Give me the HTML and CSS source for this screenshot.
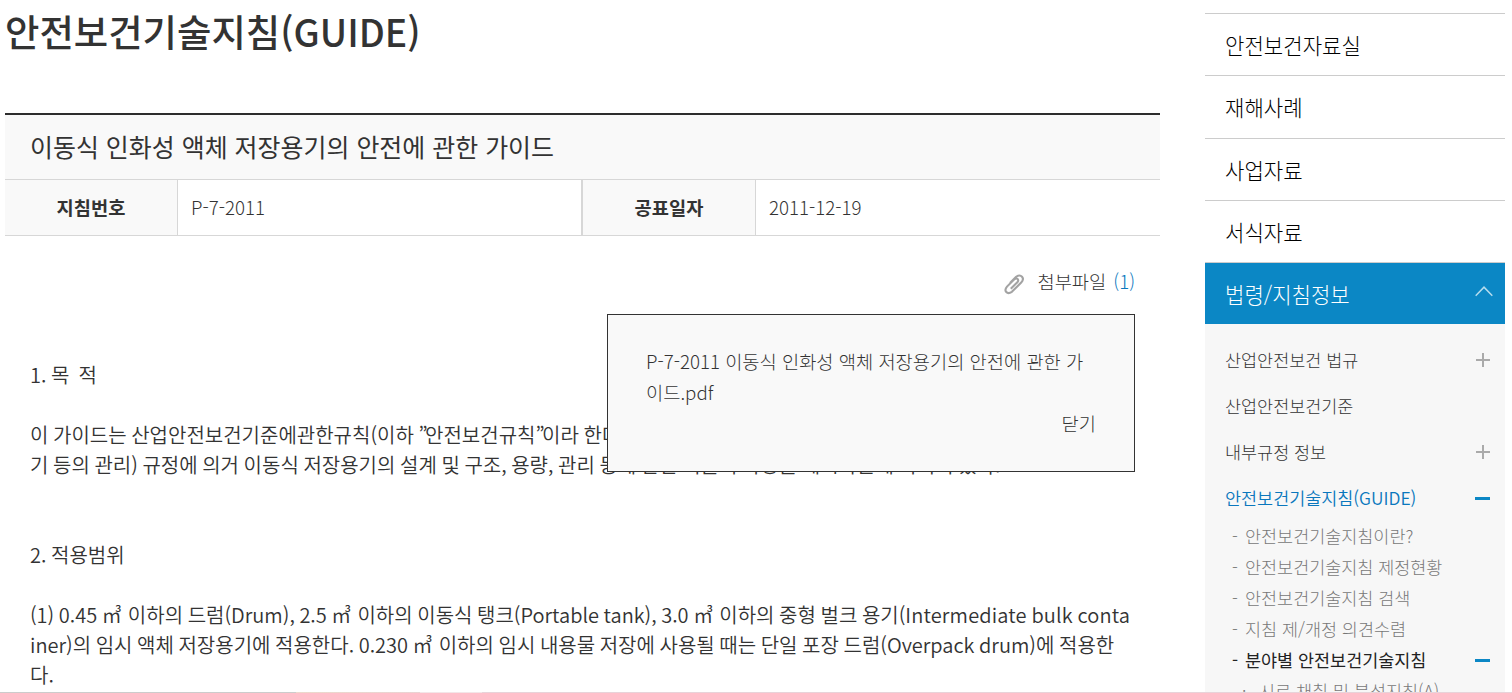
FILE: index.html
```html
<!DOCTYPE html>
<html lang="ko">
<head>
<meta charset="UTF-8">
<meta name="viewport" content="width=device-width, initial-scale=1.0">
<title>안전보건기술지침(GUIDE)</title>
<link rel="stylesheet" href="styles.css">
</head>
<body>
<div class="wrap">
<main class="content">
<h1 class="page-title">안전보건기술지침(GUIDE)</h1>
<section class="board-view">
<h2 class="board-title">이동식 인화성 액체 저장용기의 안전에 관한 가이드</h2>
<dl class="board-info">
<dt>지침번호</dt>
<dd>P-7-2011</dd>
<dt class="second">공표일자</dt>
<dd>2011-12-19</dd>
</dl>
<div class="file-area">
<a class="file-btn">
<svg class="icon-clip" width="20" height="21" viewBox="0 0 20 21"><path d="M6.800 14.800 13.600 8q1.200-1.700 0-2.900t-3 0L3 12.600q-2.700 3.200-.7 5.400t5.600-.2l9.300-9.200q3-3.500.8-5.900t-5.900.1L6 9.100"/></svg>
<span class="file-label">첨부파일</span> <span class="file-count">(1)</span>
</a>
<div class="file-layer">
<p class="file-name">P-7-2011 이동식 인화성 액체 저장용기의 안전에 관한 가<br>이드.pdf</p>
<p class="file-close">닫기</p>
</div>
</div>
<div class="board-text">
<p>1. 목&nbsp; 적</p>
<p>이 가이드는 산업안전보건기준에관한규칙(이하 <span class="quote">”</span>안전보건규칙<span class="quote">”</span>이라 한다)<br>기 등의 관리) 규정에 의거 이동식 저장용기의 설계 및 구조, 용량, 관리 등에 관한 기술적 사항을 제시하는데 목적이 있다.</p>
<p class="next">2. 적용범위</p>
<p>(1) 0.45 <span class="unit">㎥</span> 이하의 드럼(Drum), 2.5 <span class="unit">㎥</span> 이하의 이동식 탱크(Portable tank), 3.0 <span class="unit">㎥</span> 이하의 중형 벌크 용기(<span class="latin">Intermediate bulk conta</span><br>iner)의 임시 액체 저장용기에 적용한다. 0.230 <span class="unit">㎥</span> 이하의 임시 내용물 저장에 사용될 때는 단일 포장 드럼(Overpack drum)에 적용한<br>다.</p>
</div>
</section>
</main>
<nav class="side">
<ul class="side-menu">
<li>안전보건자료실</li>
<li>재해사례</li>
<li>사업자료</li>
<li>서식자료</li>
<li class="on">법령/지침정보
<svg class="icon-up" width="18" height="11" viewBox="0 0 18 11"><path d="M.7 9.800 9 1.200l8.300 8.600"/></svg>
</li>
</ul>
<ul class="sub-menu">
<li>산업안전보건 법규<i class="plus"></i></li>
<li>산업안전보건기준</li>
<li>내부규정 정보<i class="plus"></i></li>
<li class="on">안전보건기술지침(GUIDE)<i class="minus"></i></li>
</ul>
<ul class="depth-menu">
<li>안전보건기술지침이란?</li>
<li>안전보건기술지침 제정현황</li>
<li>안전보건기술지침 검색</li>
<li>지침 제/개정 의견수렴</li>
<li class="on">분야별 안전보건기술지침<i class="minus"></i></li>
<li class="leaf">시료 채취 및 분석지침(A)</li>
</ul>
</nav>
</div>
<div class="bottom-line"></div>
</body>
</html>
```
FILE: styles.css
```css
html,body,h1,h2,p,ul,dl,dd{
margin:0;
padding:0;
}
body{
position: relative;
height: 693px;
overflow: hidden;
background: #fff;
color: #333;
font-family: "Noto Sans CJK KR", sans-serif;
font-size: 18.7px;
font-weight: 300;
}
ul{list-style: none;}
.wrap{
display: flex;
gap: 45px;
width: 1500px;
height: 693px;
margin-left: 5px;
white-space: nowrap;
}
.content{width: 1155px;}
.page-title{
height: 113px;
font-size: 37.4px;
font-weight: 500;
line-height: 63px;
box-sizing: border-box;
}
.board-view{border-top: 2px solid #2d2d2d;}
.board-title{
height: 64px;
padding-left: 25px;
background: #f9f9f9;
font-size: 24.960px;
font-weight: 400;
line-height: 62px;
}
.board-info{
display: grid;
grid-template-columns: 173px 403px 175px 404px;
grid-template-rows: 55px;
height: 57px;
box-sizing: border-box;
border-top: 1px solid #d7d7d7;
border-bottom: 1px solid #d7d7d7;
line-height: 53px;
}
.board-info dt{
background: #f9f9f9;
border-right: 1px solid #d7d7d7;
font-weight: 700;
text-align: center;
}
.board-info dt.second{border-left: 2px solid #d7d7d7;}
.board-info dd{padding-left: 13px;}
.file-area{
position: relative;
height: 124px;
padding-right: 25px;
}
.file-btn{
display: flex;
justify-content: flex-end;
align-items: center;
padding-top: 29px;
line-height: 32px;
}
.icon-clip{
margin: 6px 13px 0 0;
fill: none;
stroke: #a3a3a3;
stroke-width: 2.1;
}
.file-count{
margin-left: 7px;
color: #0a77bd;
}
.file-layer{
position: absolute;
top: 78px;
right: 25px;
width: 528px;
height: 158px;
padding: 30px 38px;
box-sizing: border-box;
border: 1px solid #333;
background: #f9f9f9;
line-height: 31px;
}
.file-close{text-align: right;}
.board-text{
padding-left: 25px;
font-size: 20px;
font-weight: 350;
line-height: 30px;
word-spacing: -1px;
}
.board-text p{margin-bottom: 30px;}
.board-text .next{margin-top: 60px;}
.quote{letter-spacing: -2.500px;}
.unit{letter-spacing: 1.500px;}
.latin{letter-spacing: .15px;}
.side{
width: 300px;
margin-top: 13px;
}
.side-menu li{
height: 62.333px;
padding-left: 20px;
box-sizing: border-box;
border-top: 1px solid #ccc;
color: #000;
font-size: 21.1px;
line-height: 62px;
}
.side-menu .on{
display: flex;
justify-content: space-between;
height: 61.667px;
padding-right: 12px;
background: #0b87c5;
color: #fff;
}
.icon-up{
margin-top: 23px;
fill: none;
stroke: #b5dcee;
stroke-width: 1.5;
}
.sub-menu{
padding-top: 13px;
background: #f7f7f7;
}
.sub-menu li,.depth-menu li{
display: flex;
align-items: center;
}
.sub-menu li{
height: 46px;
padding: 0 15px 0 20px;
font-size: 17.450px;
}
.sub-menu .on{
color: #0a77bd;
font-weight: 350;
}
.plus,.minus{margin-left: auto;}
.plus{
width: 14px;
height: 14px;
background: linear-gradient(#aaa,#aaa) center/14px 2px no-repeat, linear-gradient(#aaa,#aaa) center/2px 14px no-repeat;
}
.minus{
width: 15px;
height: 3px;
margin-top: 1px;
background: #0b87c5;
}
.depth-menu{
height: 200px;
margin-top: -1px;
background: #f7f7f7;
}
.depth-menu li{
height: 31px;
padding: 0 15px 0 27px;
color: #777;
font-size: 17.450px;
}
.depth-menu li::before{
content: "-";
width: 13px;
}
.depth-menu .on{
color: #222;
font-weight: 400;
}
.depth-menu .minus{margin-top: 3px;}
.depth-menu .leaf{padding-left: 37px;}
.depth-menu .leaf::before{
content: "·";
width: 17px;
}
.bottom-line{
position: absolute;
left: 0;
bottom: 0;
width: 100%;
height: 1px;
background: linear-gradient(90deg, #ccc 296px, #ecd9cc 296px, #ead3d3 420px, #f3e6e8 420px, #f3e6e8 482px, #e8d3d9 482px);
}
```
